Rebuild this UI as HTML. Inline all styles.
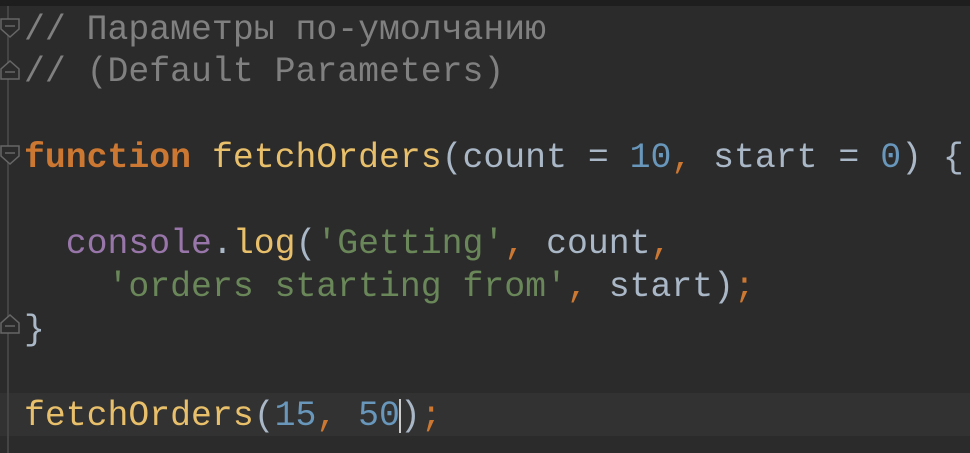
<!DOCTYPE html>
<html><head><meta charset="utf-8"><style>
html,body{margin:0;padding:0;}
body{width:970px;height:453px;background:#2b2b2b;position:relative;overflow:hidden;font-family:"Liberation Mono","DejaVu Sans Mono",monospace;font-size:34.8px;}
.top{position:absolute;left:0;top:0;width:970px;height:6px;background:#1e1e1e;}
.cur{position:absolute;left:0;top:393px;width:970px;height:43px;background:#323232;}
.gut{position:absolute;left:7px;top:6px;width:2px;height:447px;background:#444;}
.l{position:absolute;left:24px;white-space:pre;line-height:43px;color:#a9b7c6;}
.c{color:#808080}.k{color:#cc7832;font-weight:bold}.f{color:#e8bf6a}.n{color:#6897bb}.s{color:#6a8759}.p{color:#9876aa}.o{color:#cc7832}
.fold{position:absolute;left:0;width:20px;height:20px;}
.caret{display:inline-block;width:2px;height:34px;background:#ccc;vertical-align:middle;margin:0 -1px;}
</style></head><body>
<div class="top"></div>
<div class="cur"></div>
<div class="gut"></div>
<svg class="fold" style="top:18px" viewBox="0 0 20 20"><path d="M1 1H19V11L10 19L1 11Z" fill="#2b2b2b" stroke="#666" stroke-width="1.5"/><path d="M5 8H15" stroke="#666" stroke-width="1.5"/></svg>
<svg class="fold" style="top:60px" viewBox="0 0 20 20"><path d="M1 19H19V9L10 1L1 9Z" fill="#2b2b2b" stroke="#666" stroke-width="1.5"/><path d="M5 12H15" stroke="#666" stroke-width="1.5"/></svg>
<svg class="fold" style="top:145px" viewBox="0 0 20 20"><path d="M1 1H19V11L10 19L1 11Z" fill="#2b2b2b" stroke="#666" stroke-width="1.5"/><path d="M5 8H15" stroke="#666" stroke-width="1.5"/></svg>
<svg class="fold" style="top:314px" viewBox="0 0 20 20"><path d="M1 19H19V9L10 1L1 9Z" fill="#2b2b2b" stroke="#666" stroke-width="1.5"/><path d="M5 12H15" stroke="#666" stroke-width="1.5"/></svg>
<div class="l c" style="top:9px">// Параметры по-умолчанию</div>
<div class="l c" style="top:51px">// (Default Parameters)</div>
<div class="l" style="top:137px"><span class="k">function</span> <span class="f">fetchOrders</span>(count = <span class="n">10</span><span class="o">,</span> start = <span class="n">0</span>) {</div>
<div class="l" style="top:223px">  <span class="p">console</span>.<span class="f">log</span>(<span class="s">'Getting'</span><span class="o">,</span> count<span class="o">,</span></div>
<div class="l" style="top:266px">    <span class="s">'orders starting from'</span><span class="o">,</span> start)<span class="o">;</span></div>
<div class="l" style="top:309px">}</div>
<div class="l" style="top:395px"><span class="f">fetchOrders</span>(<span class="n">15</span><span class="o">,</span> <span class="n">50</span><span class="caret"></span>)<span class="o">;</span></div>
</body></html>
